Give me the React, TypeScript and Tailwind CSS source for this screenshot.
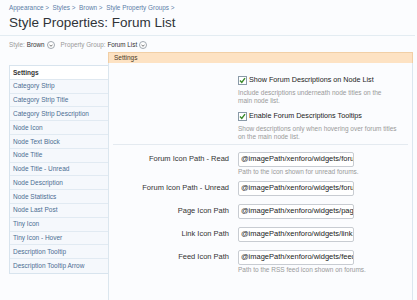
import React from "react";

const sidebar = [
  "Category Strip",
  "Category Strip Title",
  "Category Strip Description",
  "Node Icon",
  "Node Text Block",
  "Node Title",
  "Node Title - Unread",
  "Node Description",
  "Node Statistics",
  "Node Last Post",
  "Tiny Icon",
  "Tiny Icon - Hover",
  "Description Tooltip",
  "Description Tooltip Arrow",
];

function Check() {
  return (
    <span className="inline-flex h-[9px] w-[9px] items-center justify-center border border-[#8a9aa8] bg-white">
      <svg width="7" height="7" viewBox="0 0 7 7">
        <path d="M1 3.5 L2.8 5.5 L6 1.2" stroke="#3a8a2a" strokeWidth="1.4" fill="none" />
      </svg>
    </span>
  );
}

function Arrow() {
  return (
    <span className="inline-flex h-[8px] w-[8px] items-center justify-center rounded-full border border-[#a0a8b0] bg-white">
      <svg width="4" height="3" viewBox="0 0 4 3">
        <path d="M0.5 0.7 L2 2.3 L3.5 0.7" stroke="#666" strokeWidth="0.9" fill="none" />
      </svg>
    </span>
  );
}

function Row({ label, value, hint, mt }: { label: string; value: string; hint?: string; mt: string }) {
  return (
    <div className={`flex flex-col ${mt}`}>
      <div className="flex items-center">
        <div className="w-[129px] shrink-0 pr-[9px] text-right text-[7.5px] text-[#333]">{label}</div>
        <div className="flex h-[15px] w-[116px] shrink-0 items-center overflow-hidden whitespace-nowrap rounded-[2px] border border-[#c8ccd2] bg-white pl-[2px] text-[7.5px] text-[#222]">
          {value}
        </div>
      </div>
      {hint && <div className="ml-[129px] mt-[1px] text-[6.5px] leading-[8px] text-[#999]">{hint}</div>}
    </div>
  );
}

export default function App() {
  return (
    <div
      className="relative h-[300px] w-[417px] overflow-hidden bg-[#fbfcfe]"
      style={{ fontFamily: '"Liberation Sans", Arial, sans-serif' }}
    >
      <div className="px-[9px] pt-[3px] text-[6.4px] leading-[9px] text-[#5b7ea8]">
        Appearance &gt;&nbsp; Styles &gt;&nbsp; Brown &gt;&nbsp; Style Property Groups &gt;
      </div>
      <div className="px-[9px] pt-[2px] text-[13.5px] leading-[17px] text-[#2f3338]">Style Properties: Forum List</div>
      <div className="mt-[4px] h-px w-[415px] bg-[#e3ecf2]" />
      <div className="flex items-center gap-[2px] px-[9px] pt-[5px] text-[6.3px] leading-[8px] text-[#999]">
        <span>Style:</span>
        <span className="text-[#333]">Brown</span>
        <Arrow />
        <span className="ml-[4px]">Property Group:</span>
        <span className="text-[#333]">Forum List</span>
        <Arrow />
      </div>
      <div className="mt-[3px] flex">
        <div className="w-[108px] shrink-0 pt-[13px] pl-[9px]">
          <div className="border-t border-l border-b border-[#d8e4ee] bg-[#f5f8fc]">
            <div className="flex h-[13.8px] items-center border-b border-[#dfe8f0] bg-white pl-[3px] text-[6.5px] font-bold text-[#333]">
              Settings
            </div>
            {sidebar.map((s, i) => (
              <div
                key={s}
                className={`flex h-[13.8px] items-center pl-[3px] text-[6.5px] text-[#4b6d92] ${
                  i < sidebar.length - 1 ? "border-b border-[#e1eaf2]" : ""
                }`}
              >
                {s}
              </div>
            ))}
          </div>
        </div>
        <div className="flex w-[305px] flex-col">
          <div className="flex h-[11px] items-center border border-b-0 border-[#f1cfa6] bg-[#fde2c3] pl-[5px] text-[6.5px] text-[#4a3a2a]">
            Settings
          </div>
          <div className="h-[250px] border-l border-r border-[#dbe6ee] bg-[#fbfcfe]">
            <div className="pl-[129px] pt-[12px]">
              <div className="flex items-center gap-[2px] text-[7.2px] text-[#222]">
                <Check />
                <span>Show Forum Descriptions on Node List</span>
              </div>
              <div className="mt-[3px] w-[150px] text-[6.5px] leading-[8px] text-[#999]">
                Include descriptions underneath node titles on the main node list.
              </div>
              <div className="mt-[6px] flex items-center gap-[2px] text-[7.2px] text-[#222]">
                <Check />
                <span>Enable Forum Descriptions Tooltips</span>
              </div>
              <div className="mt-[3px] w-[160px] text-[6.5px] leading-[8px] text-[#999]">
                Show descriptions only when hovering over forum titles on the main node list.
              </div>
            </div>
            <div className="mx-[4px] mt-[3px] h-px bg-[#e4eaf0]" />
            <Row
              mt="mt-[7px]"
              label="Forum Icon Path - Read"
              value="@imagePath/xenforo/widgets/forum-read.png"
              hint="Path to the icon shown for unread forums."
            />
            <Row mt="mt-[5px]" label="Forum Icon Path - Unread" value="@imagePath/xenforo/widgets/forum-unread.png" />
            <Row mt="mt-[8px]" label="Page Icon Path" value="@imagePath/xenforo/widgets/page.png" />
            <Row mt="mt-[8px]" label="Link Icon Path" value="@imagePath/xenforo/widgets/link.png" />
            <Row
              mt="mt-[8px]"
              label="Feed Icon Path"
              value="@imagePath/xenforo/widgets/feed.png"
              hint="Path to the RSS feed icon shown on forums."
            />
          </div>
        </div>
      </div>
    </div>
  );
}
